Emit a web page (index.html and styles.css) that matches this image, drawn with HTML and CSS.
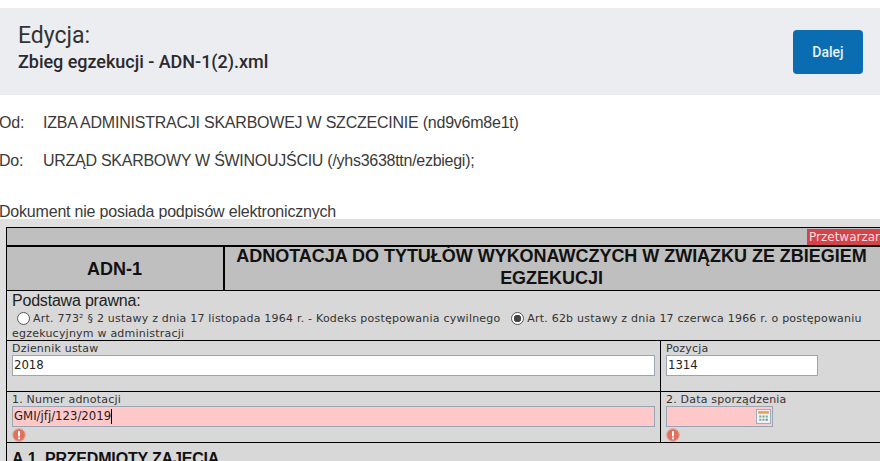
FILE: index.html
```html
<!DOCTYPE html>
<html lang="pl">
<head>
<meta charset="utf-8">
<title>Edycja</title>
<link rel="stylesheet" href="styles.css">
</head>
<body>
<header class="bar">
  <div class="bar-text">
    <h1 class="bar-title">Edycja:</h1>
    <h2 class="bar-sub">Zbieg egzekucji - ADN-1(2).xml</h2>
  </div>
  <button class="btn">Dalej</button>
</header>
<section class="meta">
  <p class="meta-row"><span class="meta-key">Od:</span><span>IZBA ADMINISTRACJI SKARBOWEJ W SZCZECINIE (nd9v6m8e1t)</span></p>
  <p class="meta-row"><span class="meta-key">Do:</span><span class="meta-tight">URZĄD SKARBOWY W ŚWINOUJŚCIU (/yhs3638ttn/ezbiegi);</span></p>
  <p class="meta-sign">Dokument nie posiada podpisów elektronicznych</p>
</section>
<main class="viewer">
  <div class="badge">Przetwarzan</div>
  <div class="doc">
    <div class="strip"></div>
    <div class="head">
      <div class="head-code">ADN-1</div>
      <div class="head-title">ADNOTACJA DO TYTUŁÓW WYKONAWCZYCH W ZWIĄZKU ZE ZBIEGIEM EGZEKUCJI</div>
    </div>
    <div class="basis">
      <div class="basis-title">Podstawa prawna:</div>
      <div class="basis-text"><span class="radio"></span>Art. 773² § 2 ustawy z dnia 17 listopada 1964 r. - Kodeks postępowania cywilnego <span class="radio radio-on"></span>Art. 62b ustawy z dnia 17 czerwca 1966 r. o postępowaniu egzekucyjnym w administracji</div>
    </div>
    <div class="row">
      <div class="cell">
        <div class="label">Dziennik ustaw</div>
        <div class="field field-wide">2018</div>
      </div>
      <div class="cell cell-right">
        <div class="label">Pozycja</div>
        <div class="field field-pos">1314</div>
      </div>
    </div>
    <div class="row">
      <div class="cell">
        <div class="label">1. Numer adnotacji</div>
        <div class="field field-wide field-bad">GMI/jfj/123/2019<span class="caret"></span></div>
        <svg class="warn" viewBox="0 0 14 14" aria-hidden="true"><circle cx="7" cy="7" r="6.3" fill="#e2705f" stroke="#dfae9e"/><rect x="6" y="3" width="2" height="5.4" fill="#fff"/><rect x="6" y="9.4" width="2" height="1.9" fill="#fff"/></svg>
      </div>
      <div class="cell cell-right">
        <div class="label">2. Data sporządzenia</div>
        <div class="field field-date field-bad">
          <svg class="cal" viewBox="0 0 14 14" aria-hidden="true"><rect x=".5" y=".5" width="13" height="13" fill="#f2f5f8" stroke="#9db0c0"/><rect x="2" y="2" width="10" height="2.4" fill="#ef9a4c"/><path d="M3 6h2v2H3zM6 6h2v2H6zM9 6h2v2H9zM3 9h2v2H3zM6 9h2v2H6z" fill="#7fa98d"/><path d="M9 9h2v2H9z" fill="#6f8fb5"/></svg>
        </div>
        <svg class="warn" viewBox="0 0 14 14" aria-hidden="true"><circle cx="7" cy="7" r="6.3" fill="#e2705f" stroke="#dfae9e"/><rect x="6" y="3" width="2" height="5.4" fill="#fff"/><rect x="6" y="9.4" width="2" height="1.9" fill="#fff"/></svg>
      </div>
    </div>
    <div class="section">A.1. PRZEDMIOTY ZAJĘCIA</div>
  </div>
</main>
</body>
</html>
```
FILE: styles.css
```css
* { box-sizing: border-box; }
html, body { height: 461px; overflow: hidden; }
body { margin: 0; background: #fff; font-family: "Liberation Sans", Arial, sans-serif; color: #333; }

.bar {
  margin-top: 8px;
  height: 87px;
  padding: 0 17px 0 18px;
  background: #ecedf1;
  display: flex;
  align-items: center;
  justify-content: space-between;
  font-family: Roboto, sans-serif;
}
.bar-text { padding-bottom: 7px; }
.bar-title { margin: 0; font-size: 23px; line-height: 27px; font-weight: 400; color: #333; }
.bar-sub { margin: 0; font-size: 18px; letter-spacing: -0.03px; line-height: 25px; font-weight: 500; color: #2a2a2e; }
.btn {
  width: 70px;
  height: 44px;
  border: 0;
  border-radius: 4px;
  background: #0a6db1;
  color: #e8f3fa;
  font: 500 14px Roboto, sans-serif;
}

.meta { font-size: 16px; letter-spacing: -0.23px; color: #3a3a3a; height: 124px; padding-top: 18px; margin-left: -1px; }
.meta p { margin: 0; line-height: 19px; }
.meta-row { display: flex; margin-bottom: 19px !important; }
.meta-key { width: 44px; }
.meta-tight { letter-spacing: -0.27px; }
.meta-sign { padding-top: 13px; letter-spacing: -0.2px; }

.viewer {
  position: relative;
  height: 242px;
  padding: 8px 0 0 6px;
  background: #dfdfdf;
  overflow: hidden;
}
.badge {
  position: absolute;
  top: 10px;
  right: 0;
  height: 16px;
  padding-left: 2px;
  width: 73px;
  background: #d4434a;
  color: #f7dede;
  font: 12px/16px "DejaVu Sans", Verdana, sans-serif;
  white-space: nowrap;
  overflow: hidden;
}
.doc {
  width: 900px;
  border: 1px solid #000;
  border-bottom: 0;
  background: #d8d8d8;
  color: #1c1c1c;
}
.strip { height: 17px; background: #bfbfbf; }
.head {
  display: grid;
  grid-template-columns: 218px 1fr;
  height: 46px;
  background: #bfbfbf;
  border-top: 2px solid #000;
  border-bottom: 1px solid #000;
  font-weight: 700;
  color: #111;
}
.head-code {
  border-right: 2px solid #000;
  display: flex;
  align-items: center;
  justify-content: center;
  font-size: 18px;
  padding: 1px 1px 0 0;
}
.head-title {
  width: 655px;
  margin: -2px 0 0 -1px;
  text-align: center;
  font-size: 18px;
  letter-spacing: -0.03px;
  line-height: 22px;
}
.basis { height: 50px; border-bottom: 1px solid #000; padding: 0 0 0 5px; }
.basis-title { font-size: 16px; letter-spacing: -0.2px; line-height: 19px; color: #222; }
.basis-text {
  width: 862px;
  padding-top: 1px;
  font: 11px/15px "DejaVu Sans", Verdana, sans-serif;
  letter-spacing: 0.22px;
  color: #333;
}
.radio {
  display: inline-block;
  width: 13px;
  height: 13px;
  margin: 0 3px 0 5px;
  vertical-align: -3px;
  border: 1px solid #555;
  border-radius: 50%;
  background: #fff;
}
.radio-on { background: radial-gradient(circle, #444 0 3.5px, #fff 4px); margin-left: 7px; }
.row {
  display: grid;
  grid-template-columns: 653px 1fr;
  border-bottom: 1px solid #000;
  height: 51px;
}
.cell { padding: 2px 0 0 5px; min-width: 0; }
.cell-right { border-left: 1px solid #000; }
.label { font: 11px/12px "DejaVu Sans", Verdana, sans-serif; letter-spacing: 0.2px; color: #333; }
.field {
  height: 21px;
  padding: 0 1px;
  border: 1px solid #9aa4b2;
  background: #fff;
  font: 11.7px/19px "DejaVu Sans", Verdana, sans-serif;
  color: #222;
  display: flex;
  align-items: center;
}
.field-wide { width: 643px; }
.field-pos { width: 152px; }
.field-date { width: 107px; justify-content: flex-end; }
.field-bad { background: #ffc9c9; }
.caret { display: inline-block; width: 1px; height: 15px; background: #000; }
.warn { display: block; width: 14px; height: 14px; margin-top: 1px; }
.cal { display: block; width: 15px; height: 15px; }
.section { padding: 7px 0 0 5px; font-size: 16px; letter-spacing: -0.18px; line-height: 18px; font-weight: 700; color: #111; }
```
